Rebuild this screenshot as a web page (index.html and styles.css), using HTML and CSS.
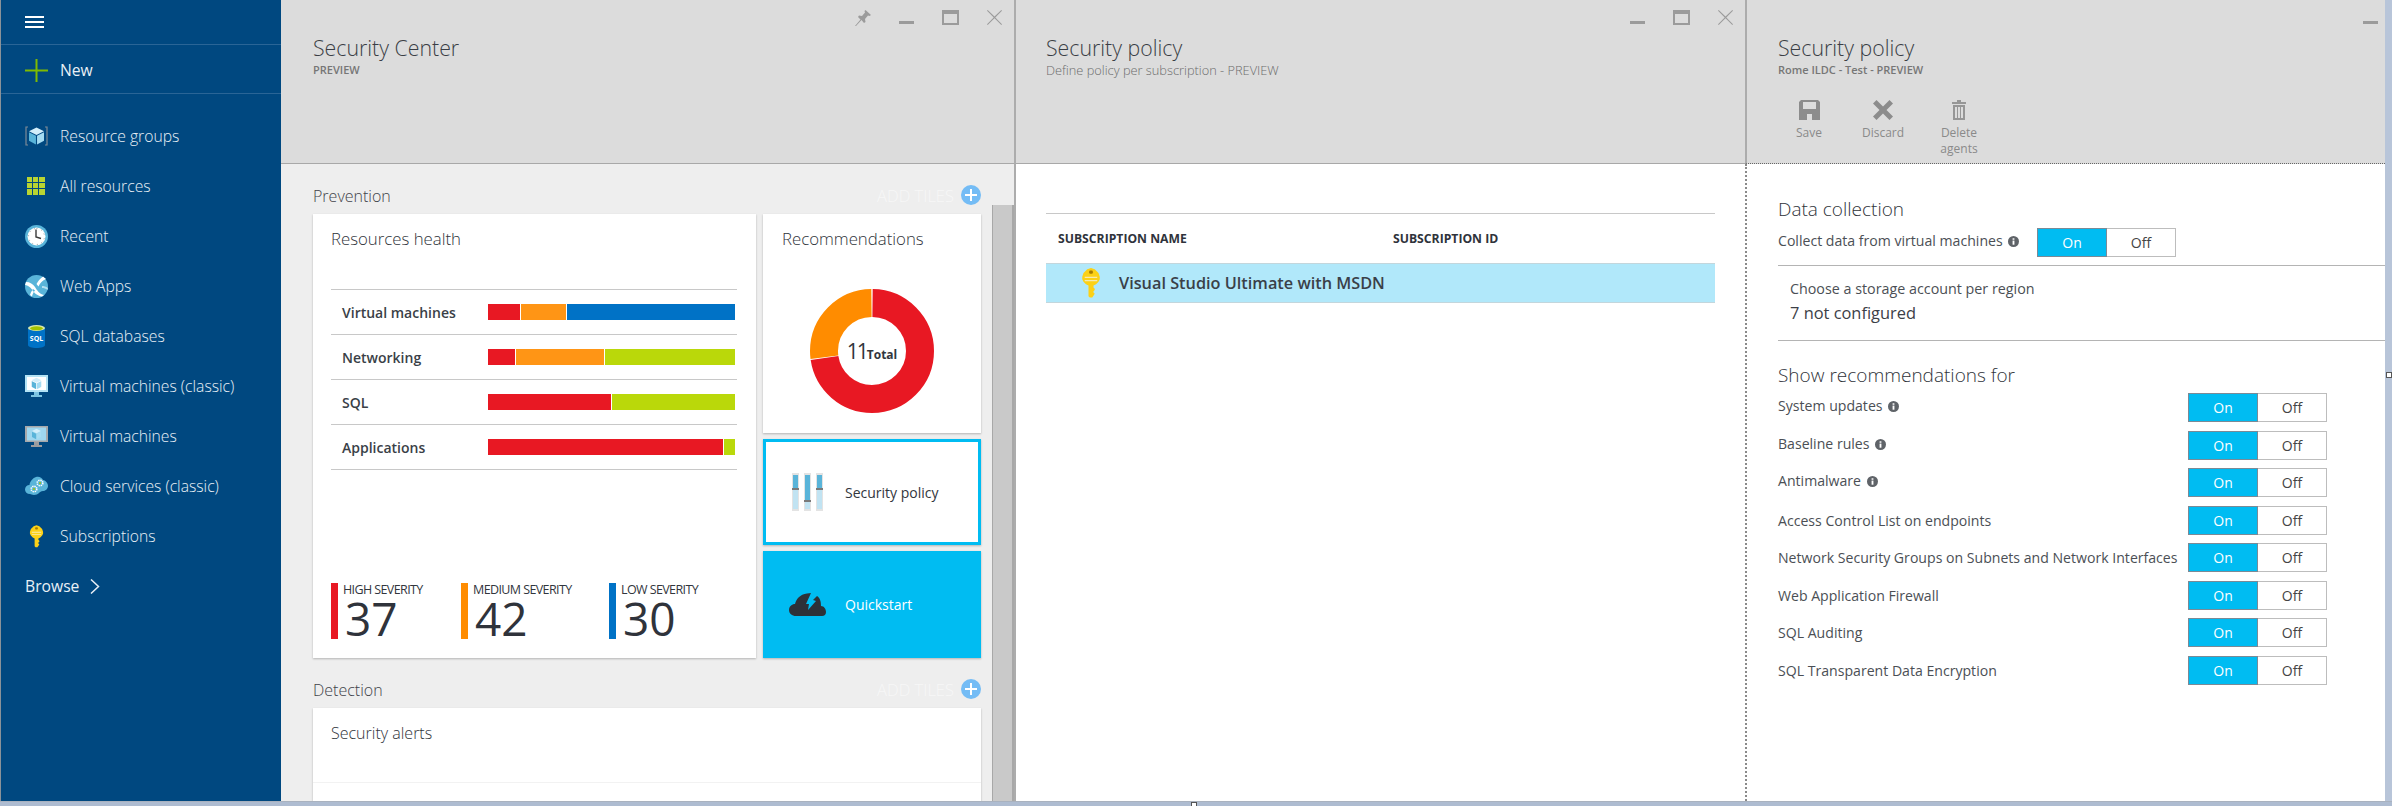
FILE: index.html
```html
<!DOCTYPE html>
<html lang="en">
<head>
  <meta charset="UTF-8" />
  <title>Security policy</title>
  <link rel="stylesheet" href="styles.css">
</head>
<body>
  <svg class="defs" aria-hidden="true">
    <symbol id="i-min" viewBox="0 0 15 14"><rect x="0" y="11" width="15" height="3"/></symbol>
    <symbol id="i-max" viewBox="0 0 17 15"><path d="M0 0h17v15H0zM2 4v9h13V4z" fill-rule="evenodd"/></symbol>
    <symbol id="i-close" viewBox="0 0 15 15"><path d="M.7 0L7.5 6.6 14.3 0l.7.7L8.3 7.5 15 14.3l-.7.7L7.5 8.300 .7 15l-.7-.7L6.700 7.500 0 .7z"/></symbol>
    <symbol id="i-key" viewBox="0 0 16 24">
      <path fill="#fcd116" d="M8 0l3 1 3 3 1 3v2l-1 2-2 2-2 1v1.500l1 1v1l-1 1v1l1 1-2 3H7l-1-1V14l-2-1-2-2-1-2V7l1-3 3-3z"/>
      <rect x="6.500" y="2" width="3" height="2.500" rx="1" fill="#a67c00"/>
      <path fill="#f6ebaf" d="M3 7h10v1H3zM3 9.500h10v1H3z"/>
    </symbol>
    <symbol id="i-info" viewBox="0 0 12 12">
      <circle cx="6" cy="6" r="6" fill="#5f6368"/>
      <rect x="5" y="5" width="2" height="4.500" fill="#fff"/>
      <rect x="5" y="2.500" width="2" height="1.600" fill="#fff"/>
    </symbol>
    <symbol id="i-cube" viewBox="0 0 14 16">
      <path fill="#d2eefa" d="M7 0l7 3.500-7 3.500-7-3.500z"/>
      <path fill="#59b4d9" d="M0 4.500l6.500 3.200V16L0 12.500z"/>
      <path fill="#a5dcf2" d="M14 4.500L7.500 7.700V16l6.500-3.500z"/>
    </symbol>
  </svg>

  <div class="window">
    <nav class="sidebar">
      <div class="menu-btn"><span></span><span></span><span></span></div>
      <div class="new-row">
        <svg class="icon" width="23" height="23" viewBox="0 0 23 23"><path fill="#7fba00" d="M10.500 0h2v10.500H23v2H12.500V23h-2V12.500H0v-2h10.500z"/></svg>
        <span>New</span>
      </div>
      <ul class="nav-list">
        <li>
          <svg class="icon" width="23" height="20" viewBox="0 0 23 20">
            <path fill="none" stroke="#7d8a96" stroke-width="1.200" d="M3 1H1v18h2M20 1h2v18h-2"/>
            <use href="#i-cube" x="4" y="1" width="15" height="18"/>
          </svg>
          <span>Resource groups</span>
        </li>
        <li>
          <svg class="icon" width="23" height="18" viewBox="0 0 23 18">
            <path fill="#b8d432" d="M2 0h5v5H2zM8 0h5v5H8zM14 0h6v5h-6zM2 6h5v5H2zM8 6h5v5H8zM14 6h6v5h-6zM2 12h5v6H2zM8 12h5v6H8zM14 12h6v6h-6z"/>
          </svg>
          <span>All resources</span>
        </li>
        <li>
          <svg class="icon" width="23" height="23" viewBox="0 0 23 23">
            <circle cx="11.500" cy="11.500" r="11.500" fill="#59b4d9"/>
            <circle cx="11.500" cy="11.500" r="9" fill="#fff"/>
            <path fill="none" stroke="#3a3a3a" stroke-width="1.400" d="M11 4.500v7.500l5 1.500"/>
            <path fill="none" stroke="#999" stroke-width="1" stroke-dasharray="1 3.700" d="M11.500 3.500a8 8 0 1 1-.01 0"/>
          </svg>
          <span>Recent</span>
        </li>
        <li>
          <svg class="icon" width="23" height="23" viewBox="0 0 23 23">
            <circle cx="11.500" cy="11.500" r="11.500" fill="#59b4d9"/>
            <path fill="#fff" d="M1 7c4 0 7 2 9 5 2 3 4 7 9 8l-2 1.500c-5-.5-8-4-10-7-2-2.500-4-4-7-4.500zM18 1.500c-3 2-5 5-6.500 7.500l2 2.500c1.500-3.500 4-6 7.500-7.500zM8 14c-1.500 2-2.500 4-3 6l2 1.500c.5-2.500 1.500-4.500 3-6z"/>
            <path fill="#b3e0f2" d="M17 11c2 0 4 .5 6 2l-.5 2c-2-1.500-3.500-2-5.500-2z"/>
          </svg>
          <span>Web Apps</span>
        </li>
        <li>
          <svg class="icon" width="23" height="23" viewBox="0 0 23 23">
            <path fill="#0072c6" d="M3 3h17v17c0 2-4 3-8.500 3S3 22 3 20z"/>
            <ellipse cx="11.500" cy="3" rx="8.500" ry="3" fill="#d9e8a8"/>
            <ellipse cx="11.500" cy="3.300" rx="6.500" ry="2" fill="#a4c400"/>
            <text x="11.500" y="15.500" class="sql-text">SQL</text>
          </svg>
          <span>SQL databases</span>
        </li>
        <li>
          <svg class="icon" width="23" height="22" viewBox="0 0 23 22">
            <rect width="23" height="17" fill="#b3e3f5"/>
            <rect x="2" y="2" width="19" height="13" fill="#fff"/>
            <use href="#i-cube" x="6.500" y="2.500" width="10" height="12"/>
            <path fill="#7cc4e2" d="M9 17h5v3h3v2H6v-2h3z"/>
          </svg>
          <span>Virtual machines (classic)</span>
        </li>
        <li>
          <svg class="icon" width="23" height="21" viewBox="0 0 23 21">
            <rect width="23" height="16" fill="#a6a8ab"/>
            <rect x="2" y="1.500" width="19" height="13" fill="#9fd7ef"/>
            <use href="#i-cube" x="7" y="2.500" width="9" height="11"/>
            <path fill="#9a9c9f" d="M9 16h5v3h3v2H6v-2h3z"/>
          </svg>
          <span>Virtual machines</span>
        </li>
        <li>
          <svg class="icon" width="23" height="20" viewBox="0 0 23 20">
            <path fill="#59b4d9" d="M5 18c-3 0-5-2-5-4.500S2 9 4.500 9C5 5 8 2 11 1c3-1 6 .5 7 3 3 .5 5 3.500 5 6 0 3-3 5-5 5-2 0-3 1-4 2s-3 2-5 2c-2 0-3-1-4-1z"/>
            <circle cx="15" cy="7" r="2.800" fill="none" stroke="#fff" stroke-width="1.600" stroke-dasharray="1.400 .8"/>
            <circle cx="15" cy="7" r="1" fill="#a4c400"/>
            <circle cx="9" cy="13" r="2.800" fill="none" stroke="#fff" stroke-width="1.600" stroke-dasharray="1.400 .8"/>
            <circle cx="9" cy="13" r="1" fill="#a4c400"/>
          </svg>
          <span>Cloud services (classic)</span>
        </li>
        <li>
          <svg class="icon" width="23" height="23" viewBox="0 0 23 23"><use href="#i-key" x="4" y="0" width="15" height="23"/></svg>
          <span>Subscriptions</span>
        </li>
      </ul>
      <div class="browse">
        <span>Browse</span>
        <svg width="10" height="15" viewBox="0 0 10 15"><path fill="none" stroke="#e8eef4" stroke-width="1.500" d="M1 .5l7.500 7L1 14.500"/></svg>
      </div>
    </nav>

    <section class="blade blade-center">
      <header class="blade-header">
        <div class="controls">
          <svg width="16" height="16" viewBox="0 0 16 16"><path d="M10.500 0L16 5l-1.500 1-1.500-.5-3 3.500.500 3-1.500 1L6.500 10 1 16l-1 0 5.500-6.500L3 7l1-1.500 3 .5 3-3.500-.5-1.500z"/></svg>
          <svg width="15" height="14"><use href="#i-min"/></svg>
          <svg width="17" height="15"><use href="#i-max"/></svg>
          <svg width="15" height="15"><use href="#i-close"/></svg>
        </div>
        <h1>Security Center</h1>
        <p class="blade-sub blade-sub-bold">PREVIEW</p>
      </header>
      <div class="center-body">
        <div class="center-content">
          <div class="section-head">
            <h2>Prevention</h2>
            <div class="add-tiles">ADD TILES <span class="add-btn"></span></div>
          </div>
          <div class="tiles">
            <div class="tile health">
              <h3>Resources health</h3>
              <div class="health-table">
                <div class="health-row">
                  <span>Virtual machines</span>
                  <div class="bar"><i class="red" style="width:32px"></i><i class="orange" style="width:45px"></i><i class="blue" style="width:168px"></i></div>
                </div>
                <div class="health-row">
                  <span>Networking</span>
                  <div class="bar"><i class="red" style="width:27px"></i><i class="orange" style="width:88px"></i><i class="lime" style="width:130px"></i></div>
                </div>
                <div class="health-row">
                  <span>SQL</span>
                  <div class="bar"><i class="red" style="width:123px"></i><i class="lime" style="width:123px"></i></div>
                </div>
                <div class="health-row">
                  <span>Applications</span>
                  <div class="bar"><i class="red" style="width:235px"></i><i class="lime" style="width:11px"></i></div>
                </div>
              </div>
              <div class="stats">
                <div class="stat stat-high"><small>HIGH SEVERITY</small><b>37</b></div>
                <div class="stat stat-medium"><small>MEDIUM SEVERITY</small><b>42</b></div>
                <div class="stat stat-low"><small>LOW SEVERITY</small><b>30</b></div>
              </div>
            </div>
            <div class="tile-col">
              <div class="tile recs">
                <h3>Recommendations</h3>
                <div class="donut">
                  <svg width="124" height="124" viewBox="0 0 124 124">
                    <g transform="rotate(-90 62 62)" fill="none" stroke-width="28">
                      <circle cx="62" cy="62" r="48" stroke="#e81823" pathLength="1100" stroke-dasharray="797 303" stroke-dashoffset="-2"/>
                      <circle cx="62" cy="62" r="48" stroke="#ff8c00" pathLength="1100" stroke-dasharray="296 804" stroke-dashoffset="-802"/>
                    </g>
                  </svg>
                  <div class="donut-label"><b>11</b><span>Total</span></div>
                </div>
              </div>
              <div class="tile link-tile policy-tile">
                <svg class="tile-icon" width="31" height="38" viewBox="0 0 31 38">
                  <path fill="#e3e3e3" d="M0 0h7v38H0zM12 0h7v38h-7zM24 0h7v38h-7z"/>
                  <path fill="#c1e3f2" d="M1 2h5v34H1zM13 2h5v34h-5zM25 2h5v34h-5z"/>
                  <path fill="#59b4d9" d="M1 2h5v14H1zM13 2h5v26h-5zM25 2h5v14h-5z"/>
                  <path fill="#7a7a7a" d="M0 15h7v2H0zM12 27h7v2h-7zM24 15h7v2h-7z"/>
                </svg>
                <span>Security policy</span>
              </div>
              <div class="tile link-tile quick-tile">
                <svg class="tile-icon" width="37" height="23" viewBox="0 0 37 23">
                  <path fill="#2d3138" d="M7 23C3 23 0 20.500 0 17 0 13.500 3 11 6 11 7 6 11 1.500 18 .5L22 0 17 11h3l-1 6 8-9-3-1 4-4c3 2 4 5 4 10 3 0 5 3 5 6 0 2.500-1.500 4-4 4z"/>
                </svg>
                <span>Quickstart</span>
              </div>
            </div>
          </div>
          <div class="section-head">
            <h2>Detection</h2>
            <div class="add-tiles">ADD TILES <span class="add-btn"></span></div>
          </div>
          <div class="tile alerts">
            <h3>Security alerts</h3>
          </div>
        </div>
        <div class="scrollbar"><div class="thumb"></div></div>
      </div>
    </section>

    <section class="blade blade-list">
      <header class="blade-header">
        <div class="controls">
          <svg width="15" height="14"><use href="#i-min"/></svg>
          <svg width="17" height="15"><use href="#i-max"/></svg>
          <svg width="15" height="15"><use href="#i-close"/></svg>
        </div>
        <h1>Security policy</h1>
        <p class="blade-sub blade-sub-long">Define policy per subscription - PREVIEW</p>
      </header>
      <div class="list-body">
        <div class="sub-table">
          <div class="sub-head"><span class="col-name">SUBSCRIPTION NAME</span><span>SUBSCRIPTION ID</span></div>
          <div class="sub-row">
            <svg width="20" height="30"><use href="#i-key"/></svg>
            <span>Visual Studio Ultimate with MSDN</span>
          </div>
        </div>
      </div>
    </section>

    <section class="blade blade-form">
      <header class="blade-header">
        <div class="controls controls-cut">
          <svg width="15" height="14"><use href="#i-min"/></svg>
        </div>
        <h1>Security policy</h1>
        <p class="blade-sub blade-sub-bold">Rome ILDC - Test - PREVIEW</p>
        <div class="commands">
          <div class="command">
            <svg width="21" height="20" viewBox="0 0 21 20"><path fill="#8c8c8c" fill-rule="evenodd" d="M2 0h17l2 2v18H0V2zM4 2v7h13V2zM8 14v6h5v-6z"/></svg>
            <span>Save</span>
          </div>
          <div class="command">
            <svg width="20" height="20" viewBox="0 0 20 20"><path fill="#8c8c8c" d="M3.500 0L10 6.500 16.500 0 20 3.500 13.500 10l6.500 6.500-3.500 3.500L10 13.500 3.500 20 0 16.500 6.500 10 0 3.500z"/></svg>
            <span>Discard</span>
          </div>
          <div class="command">
            <svg width="14" height="20" viewBox="0 0 14 20"><path fill="#969696" fill-rule="evenodd" d="M5 0h4v2h5v2H0V2h5zM1 5h12v15H1zM3 7v11h2V7zM6 7v11h2V7zM9 7v11h2V7z"/></svg>
            <span>Delete<br>agents</span>
          </div>
        </div>
      </header>
      <div class="form-body">
        <h2 class="form-title">Data collection</h2>
        <div class="collect-row">
          <span class="form-label collect-label">Collect data from virtual machines <svg class="info" width="11" height="11"><use href="#i-info"/></svg></span>
          <div class="toggle"><span class="on">On</span><span class="off">Off</span></div>
        </div>
        <div class="storage">
          <p class="storage-label">Choose a storage account per region</p>
          <p class="storage-value">7 not configured</p>
        </div>
        <h2 class="form-title recs-title">Show recommendations for</h2>
        <div class="rec-row">
          <span class="form-label">System updates <svg class="info" width="11" height="11"><use href="#i-info"/></svg></span>
          <div class="toggle"><span class="on">On</span><span class="off">Off</span></div>
        </div>
        <div class="rec-row">
          <span class="form-label">Baseline rules <svg class="info" width="11" height="11"><use href="#i-info"/></svg></span>
          <div class="toggle"><span class="on">On</span><span class="off">Off</span></div>
        </div>
        <div class="rec-row">
          <span class="form-label">Antimalware <svg class="info" width="11" height="11"><use href="#i-info"/></svg></span>
          <div class="toggle"><span class="on">On</span><span class="off">Off</span></div>
        </div>
        <div class="rec-row">
          <span class="form-label form-label-plain">Access Control List on endpoints</span>
          <div class="toggle"><span class="on">On</span><span class="off">Off</span></div>
        </div>
        <div class="rec-row">
          <span class="form-label form-label-plain">Network Security Groups on Subnets and Network Interfaces</span>
          <div class="toggle"><span class="on">On</span><span class="off">Off</span></div>
        </div>
        <div class="rec-row">
          <span class="form-label form-label-plain">Web Application Firewall</span>
          <div class="toggle"><span class="on">On</span><span class="off">Off</span></div>
        </div>
        <div class="rec-row">
          <span class="form-label form-label-plain">SQL Auditing</span>
          <div class="toggle"><span class="on">On</span><span class="off">Off</span></div>
        </div>
        <div class="rec-row">
          <span class="form-label form-label-plain">SQL Transparent Data Encryption</span>
          <div class="toggle"><span class="on">On</span><span class="off">Off</span></div>
        </div>
      </div>
    </section>

    <div class="edge-right"></div>
  </div>
  <div class="edge-bottom"></div>
  <span class="handle handle-right"></span>
  <span class="handle handle-bottom"></span>
</body>
</html>
```

FILE: styles.css
```css
* {
  box-sizing: border-box;
}

html, body {
  height: 100%;
}

body {
  margin: 0;
  position: relative;
  overflow: hidden;
  font-family: "Open Sans", "Noto Sans", sans-serif;
  color: #32363d;
  background: #b8c5d9;
}

h1, h2, h3, p, ul {
  margin: 0;
  padding: 0;
  font-weight: 300;
}

.defs {
  display: none;
}

.window {
  display: flex;
  height: 801px;
}

.edge-bottom {
  height: 5px;
  background: #aebcd1;
  border-top: 1px solid #a9b2bf;
}

.edge-right {
  width: 7px;
  background: #b8c5d9;
}

.handle {
  position: absolute;
  width: 6px;
  height: 6px;
  background: #fff;
  border: 1px solid #555;
}

.handle-right {
  left: 2386px;
  top: 372px;
}

.handle-bottom {
  left: 1191px;
  top: 802px;
}

/* Left nav */
.sidebar {
  width: 281px;
  flex: none;
  background: #004880;
  border-left: 1px solid #8a9299;
  color: #e9f0f6;
  font-size: 15.7px;
}

.menu-btn {
  height: 45px;
  padding: 16px 0 0 24px;
  border-bottom: 1px solid #2a6596;
}

.menu-btn span {
  display: block;
  width: 19px;
  height: 2px;
  margin-bottom: 3px;
  background: #fff;
}

.new-row {
  display: flex;
  align-items: center;
  height: 49px;
  padding: 2px 0 0 24px;
  border-bottom: 1px solid #2a6596;
}

.icon {
  flex: none;
  margin-right: 12px;
}

.nav-list {
  list-style: none;
  margin-top: 17px;
}

.nav-list li {
  display: flex;
  align-items: center;
  height: 50px;
  padding-left: 24px;
}

.sql-text {
  font-size: 7px;
  font-weight: 700;
  fill: #fff;
  text-anchor: middle;
}

.browse {
  display: flex;
  align-items: center;
  gap: 11px;
  height: 50px;
  padding-left: 24px;
}

/* Blades */
.blade {
  flex: none;
  display: flex;
  flex-direction: column;
  overflow: hidden;
  background: #fff;
}

.blade-center {
  width: 735px;
  background: #eee;
  border-right: 2px solid #acacac;
}

.blade-list {
  width: 729px;
}

.blade-form {
  width: 640px;
}

.blade-header {
  flex: none;
  height: 164px;
  padding-left: 32px;
  background: #dcdcdc;
  border-bottom: 1px solid #a8a8a8;
}

.blade-list .blade-header {
  padding-left: 30px;
}

.blade-form .blade-header {
  padding-left: 31px;
  border-left: 2px solid #acacac;
  border-bottom: 1px dotted #666;
}

.controls {
  display: flex;
  justify-content: flex-end;
  height: 33px;
  margin-right: -2px;
}

.controls svg {
  box-sizing: content-box;
  padding: 10px 14px 0;
  fill: #9b9b9b;
}

.controls-cut {
  margin-right: -7px;
}

.blade-header h1 {
  font-size: 21.3px;
  line-height: 30px;
  color: #3a3e45;
}

.blade-sub {
  font-size: 11px;
  line-height: 14px;
  color: #767676;
}

.blade-sub-bold {
  font-weight: 600;
}

.blade-sub-long {
  font-size: 12.8px;
  color: #6c6c6c;
}

.commands {
  display: flex;
  margin: 23px 0 0 -6px;
}

.command {
  display: flex;
  flex-direction: column;
  align-items: center;
  width: 74px;
  font-size: 12px;
  line-height: 16px;
  color: #8a8a8a;
  text-align: center;
}

.command:last-child {
  width: 78px;
}

.command svg {
  height: 20px;
  margin-bottom: 5px;
}

/* Security Center body */
.center-body {
  flex: 1;
  display: flex;
  min-height: 0;
}

.center-content {
  flex: 1;
  min-width: 0;
  padding: 0 11px 0 32px;
  overflow: hidden;
}

.scrollbar {
  flex: none;
  width: 22px;
  padding-top: 41px;
}

.thumb {
  height: 100%;
  background: #c9c9c9;
  border-left: 1px solid #a8a8a8;
  border-right: 2px solid #a8a8a8;
}

.section-head {
  display: flex;
  align-items: center;
  justify-content: space-between;
  height: 50px;
  padding-top: 14px;
}

.section-head h2 {
  font-size: 16px;
  color: #3f434a;
}

.add-tiles {
  display: flex;
  align-items: center;
  gap: 7px;
  margin-top: -2px;
  font-size: 16.5px;
  font-weight: 300;
  color: #f7f7f7;
}

.add-btn {
  position: relative;
  width: 20px;
  height: 20px;
  border-radius: 50%;
  background: #74bcf5;
}

.add-btn:before,
.add-btn:after {
  content: "";
  position: absolute;
  background: #fff;
}

.add-btn:before {
  left: 4px;
  top: 9px;
  width: 12px;
  height: 2px;
}

.add-btn:after {
  left: 9px;
  top: 4px;
  width: 2px;
  height: 12px;
}

.tiles {
  display: flex;
  gap: 7px;
  height: 444px;
}

.tile {
  background: #fff;
  box-shadow: 0 1px 2px rgba(0, 0, 0, 0.25);
}

.tile h3 {
  padding: 13px 0 0 18px;
  font-size: 16.8px;
  line-height: 24px;
  color: #2f333a;
}

.health {
  width: 443px;
  display: flex;
  flex-direction: column;
}

.health-table {
  margin: 38px 19px 0 18px;
  border-top: 1px solid #c8c8c8;
}

.health-row {
  display: flex;
  align-items: center;
  height: 45px;
  padding-left: 11px;
  border-bottom: 1px solid #c8c8c8;
  font-size: 14px;
  font-weight: 600;
  color: #3a3f47;
}

.health-row span {
  width: 146px;
  flex: none;
}

.bar {
  display: flex;
  gap: 1px;
  height: 16px;
}

.bar i {
  display: block;
}

.red { background: #e81823; }
.orange { background: #ff9515; }
.blue { background: #0072c6; }
.lime { background: #bad80a; }

.stats {
  display: flex;
  margin-top: auto;
  padding: 0 0 19px 18px;
}

.stat {
  width: 130px;
  height: 56px;
  padding-left: 13px;
  border-left: 7px solid #e81823;
}

.stat-medium {
  width: 148px;
  border-left-color: #ff8c00;
}

.stat-low {
  border-left-color: #0072c6;
}

.stat small {
  display: block;
  font-size: 12.5px;
  line-height: 14px;
  letter-spacing: -0.6px;
  margin-left: -8px;
}

.stat b {
  display: block;
  margin-left: -6px;
  font-size: 46px;
  line-height: 42px;
  font-weight: 500;
  color: #2f333b;
}

.tile-col {
  width: 218px;
  display: flex;
  flex-direction: column;
  gap: 6px;
}

.recs {
  height: 219px;
}

.recs h3 {
  padding-left: 19px;
}

.donut {
  position: relative;
  width: 124px;
  margin: 38px auto 0;
}

.donut svg {
  display: block;
}

.donut-label {
  position: absolute;
  left: 0;
  right: 0;
  top: 47px;
  display: flex;
  align-items: baseline;
  justify-content: center;
  line-height: 30px;
}

.donut-label b {
  font-size: 21px;
  font-weight: 400;
  letter-spacing: -2px;
}

.donut-label span {
  font-size: 12px;
  font-weight: 700;
}

.link-tile {
  display: flex;
  align-items: center;
  height: 106px;
  font-size: 14px;
}

.policy-tile {
  padding-left: 26px;
  border: 3px solid #00bcf2;
}

.policy-tile span {
  margin-left: 22px;
}

.quick-tile {
  height: 107px;
  padding-left: 26px;
  background: #00bcf2;
  color: #fff;
}

.quick-tile span {
  margin-left: 19px;
}

.alerts {
  height: 120px;
}

.alerts h3 {
  height: 75px;
  font-size: 16px;
  border-bottom: 1px solid #f2f2f2;
}

/* Subscription list */
.list-body {
  flex: 1;
  padding: 49px 30px 0;
}

.sub-head {
  display: flex;
  align-items: center;
  height: 50px;
  padding-left: 12px;
  border-top: 1px solid #c8c8c8;
  font-size: 12.2px;
  font-weight: 700;
  color: #2f333b;
}

.col-name {
  width: 335px;
}

.sub-row {
  display: flex;
  align-items: center;
  gap: 18px;
  height: 40px;
  padding-left: 35px;
  background: #b1e8fa;
  border-top: 1px solid #c3d6dc;
  border-bottom: 1px solid #c3d6dc;
  font-size: 16.3px;
  font-weight: 600;
  color: #3a4048;
}

/* Policy form */
.form-body {
  flex: 1;
  padding: 33px 0 0 31px;
  border-left: 2px dotted #8a8a8a;
}

.form-title {
  font-size: 19px;
  line-height: 24px;
  font-weight: 300;
  color: #2f333a;
}

.collect-row {
  display: flex;
  height: 45px;
  padding-top: 7px;
  border-bottom: 1px solid #b4b4b4;
}

.form-label {
  font-size: 14.1px;
  line-height: 25px;
  color: #4b4f55;
}

.form-label-plain {
  line-height: 30px;
}

.collect-label {
  width: 259px;
  flex: none;
}

.info {
  vertical-align: -1px;
  margin-left: 2px;
}

.toggle {
  display: flex;
  flex: none;
  width: 139px;
  height: 29px;
  font-size: 14px;
}

.toggle span {
  display: flex;
  align-items: center;
  justify-content: center;
}

.on {
  width: 70px;
  background: #00bcf2;
  border: 1px solid #7b8a96;
  color: #fff;
}

.off {
  flex: 1;
  background: #fff;
  border: 1px solid #bdbdbd;
  border-left: 0;
  color: #444;
}

.storage {
  height: 75px;
  padding: 11px 0 0 12px;
  border-bottom: 1px solid #b4b4b4;
}

.storage-label {
  font-size: 14.3px;
  line-height: 24px;
  font-weight: 400;
  color: #4b4f55;
}

.storage-value {
  font-size: 16.4px;
  line-height: 24px;
  font-weight: 400;
  color: #3c4047;
}

.recs-title {
  margin-top: 22px;
  margin-bottom: 6px;
}

.rec-row {
  display: flex;
  height: 37.5px;
}

.rec-row .form-label {
  width: 410px;
  flex: none;
  white-space: nowrap;
}
```
